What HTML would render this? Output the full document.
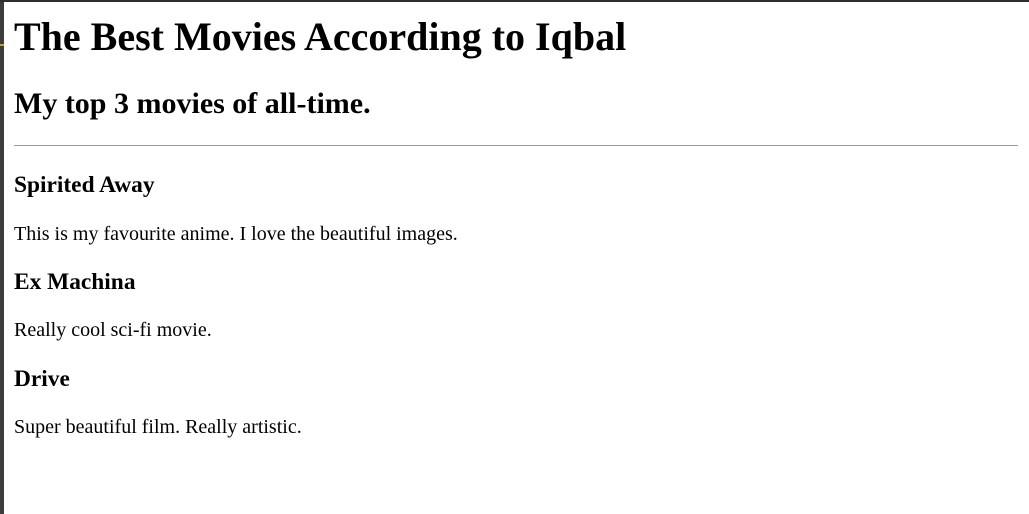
<!DOCTYPE html>
<html><head><meta charset="utf-8"><style>
html,body{margin:0;padding:0;background:#fff;}
body{font-family:"Liberation Serif",serif;font-size:20px;color:#000;width:1029px;height:514px;overflow:hidden;position:relative;}
.left{position:absolute;left:0;top:0;width:4px;height:514px;background:#3c3c3c;}
.top{position:absolute;left:0;top:0;width:1029px;height:2px;background:#2e2e2e;}
.mark{position:absolute;left:0;top:44px;width:4px;height:2px;background:#c9a227;}
.c{position:absolute;left:14px;top:2px;right:11px;}
h1{font-size:40px;margin:11.4px 0 26.8px;line-height:normal;}
h2{font-size:30px;margin:0 0 24px;line-height:normal;}
hr{margin:0 0 10px;border:0;border-top:1px solid #999;height:0;}
h3{font-size:23.4px;margin:23.4px 0;line-height:normal;}
h3.f{margin-top:26px;}
p{margin:20px 0;line-height:normal;}
</style></head><body>
<div class="left"></div><div class="top"></div><div class="mark"></div>
<div class="c">
<h1>The Best Movies According to Iqbal</h1>
<h2>My top 3 movies of all-time.</h2>
<hr>
<h3 class="f">Spirited Away</h3>
<p>This is my favourite anime. I love the beautiful images.</p>
<h3>Ex Machina</h3>
<p>Really cool sci-fi movie.</p>
<h3>Drive</h3>
<p>Super beautiful film. Really artistic.</p>
</div>
</body></html>
